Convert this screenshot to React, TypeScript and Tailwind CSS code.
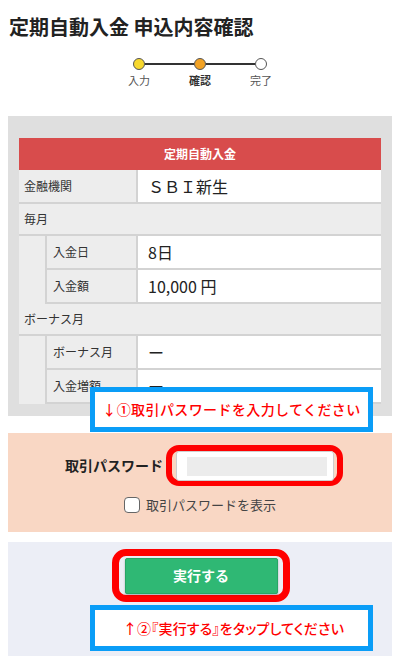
import React from "react";

function Row({ label, value, sub }: { label: string; value: React.ReactNode; sub?: boolean }) {
  return (
    <div className="flex h-[34px] border-b-2 border-[#d3d3d3]">
      <div
        className={`${sub ? "w-[91px] pl-[6px]" : "w-[119px] pl-[5px]"} flex items-center bg-[#ededed] border-r-2 border-[#d3d3d3] text-[12px] text-[#333]`}
      >
        {label}
      </div>
      <div className="flex-1 flex items-center bg-white pl-[10px] text-[16px] text-[#222]">{value}</div>
    </div>
  );
}

function GroupHead({ label }: { label: string }) {
  return (
    <div className="flex h-[32px] items-center bg-[#ededed] border-b-2 border-[#d3d3d3] pl-[5px] text-[12px] text-[#333]">
      {label}
    </div>
  );
}

export default function App() {
  return (
    <div className="w-[400px] h-[656px] overflow-hidden bg-white font-['Noto_Sans_CJK_JP','Noto_Sans',sans-serif]">
      {/* Title */}
      <div className="pt-[14px] pl-[9px] text-[20px] leading-[26px] font-bold text-[#222]">
        定期自動入金 申込内容確認
      </div>

      {/* Stepper */}
      <div className="mt-[18px] flex justify-center">
        <div className="flex items-center w-[134px]">
          <div className="w-[12px] h-[12px] rounded-full border-[1.5px] border-[#555] bg-[#f7d82e]" />
          <div className="w-[49px] h-[2px] bg-[#333]" />
          <div className="w-[12px] h-[12px] rounded-full border-[1.5px] border-[#555] bg-[#f2a224]" />
          <div className="w-[49px] h-[2px] bg-[#333]" />
          <div className="w-[12px] h-[12px] rounded-full border-[1.5px] border-[#555] bg-white" />
        </div>
      </div>
      <div className="mt-[3px] flex justify-center gap-[1px] text-[11px] leading-[14px]">
        <div className="w-[60px] text-center text-[#555]">入力</div>
        <div className="w-[60px] text-center font-bold text-[#333]">確認</div>
        <div className="w-[60px] text-center text-[#555]">完了</div>
      </div>

      {/* Gray panel */}
      <div className="relative mx-2 mt-[29px] bg-[#dfdfdf] px-[11px] pt-[22px] pb-[11px]">
        <div className="h-[267px] overflow-hidden">
          <div className="flex h-[32px] items-center justify-center bg-[#d84c4c] text-[12px] font-bold text-white">
            定期自動入金
          </div>
          <Row label="金融機関" value="ＳＢＩ新生" />
          <GroupHead label="毎月" />
          <div className="flex">
            <div className="w-[28px] bg-[#ededed] border-r-2 border-[#d3d3d3]" />
            <div className="flex-1">
              <Row sub label="入金日" value="8日" />
              <Row sub label="入金額" value="10,000 円" />
            </div>
          </div>
          <GroupHead label="ボーナス月" />
          <div className="flex">
            <div className="w-[28px] bg-[#ededed] border-r-2 border-[#d3d3d3]" />
            <div className="flex-1">
              <Row sub label="ボーナス月" value="ー" />
              <Row sub label="入金増額" value="ー" />
            </div>
          </div>
        </div>

        {/* Callout 1 */}
        <div className="absolute left-[82px] top-[271px] z-10 flex h-[45px] w-[283px] items-center justify-center border-[5px] border-[#0a9df7] bg-white text-[14px] font-medium tracking-[0.4px] text-[#ff0000]">
          ↓①取引パスワードを入力してください
        </div>
      </div>

      {/* Peach panel */}
      <div className="mx-2 mt-[17px] bg-[#f9d7c4] pt-[12px] pb-[19px]">
        <div className="flex items-center justify-center pl-[8px]">
          <div className="text-[14px] font-bold text-[#222]">取引パスワード</div>
          <div className="ml-[3px] flex h-[41px] w-[177px] items-center justify-center rounded-[13px] border-[6px] border-[#ff0000] bg-[#f9d7c4]">
            <div className="h-[30px] w-[158px] rounded-[3px] border border-[#cfcfcf] bg-white pl-[10px] pr-[6px] pt-[5px] pb-[4px]">
              <div className="h-full w-full bg-[#ececec]" />
            </div>
          </div>
        </div>
        <div className="mt-[11px] flex items-center justify-center gap-[6px]">
          <div className="h-[16px] w-[16px] rounded-[4px] border-[1.5px] border-[#666] bg-white" />
          <div className="text-[13px] leading-[16px] text-[#444]">取引パスワードを表示</div>
        </div>
      </div>

      {/* Bottom panel */}
      <div className="mx-2 mt-[10px] bg-[#eceef6] pt-[7px] pb-[20px]">
        <div className="flex justify-center pl-[2px]">
          <div className="flex h-[53px] w-[178px] items-center justify-center rounded-[14px] border-[7px] border-[#ff0000]">
            <div className="flex h-[36px] w-[153px] items-center justify-center rounded-[2px] border border-[#27a565] bg-[#2fb874] text-[14px] font-bold text-white shadow-[0_1px_2px_rgba(0,0,0,0.3)]">
              実行する
            </div>
          </div>
        </div>
        <div className="ml-[82px] mt-[3px] flex h-[46px] w-[283px] items-center justify-center border-[5px] border-[#0a9df7] bg-white pl-[4px] text-[14px] font-medium tracking-[0.2px] text-[#ff0000] [font-feature-settings:'palt']">
          ↑②『実行する』をタップしてください
        </div>
      </div>
    </div>
  );
}
